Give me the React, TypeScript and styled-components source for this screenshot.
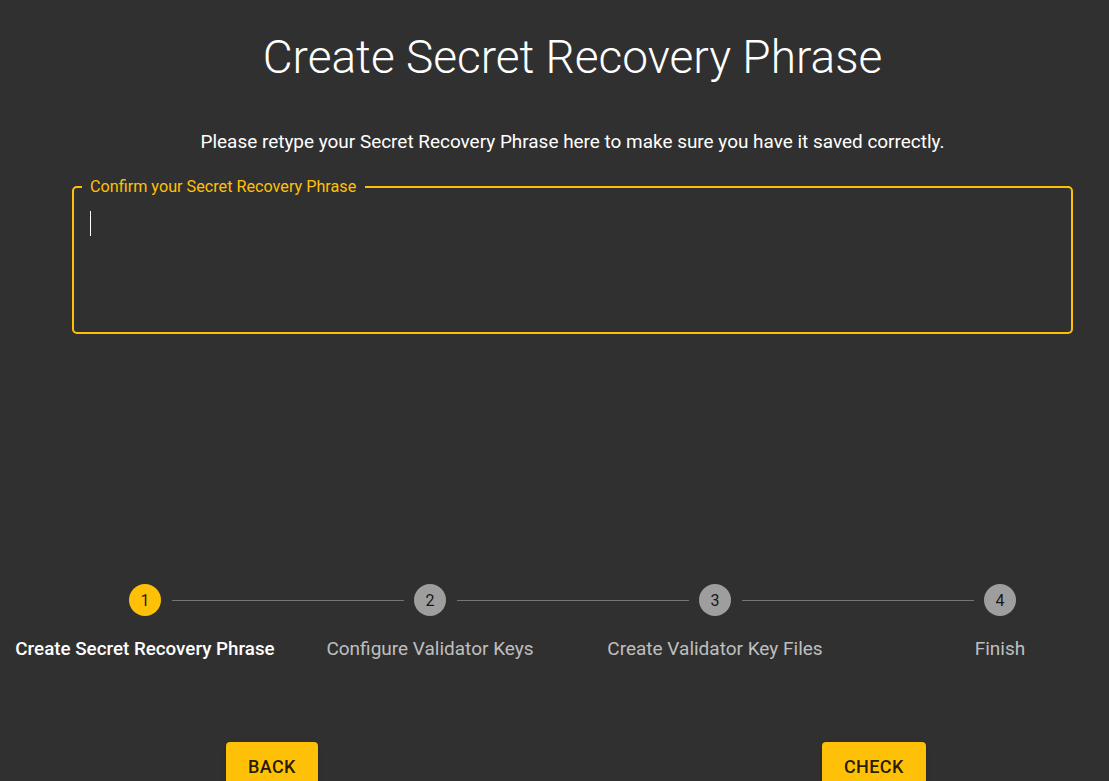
import React from "react";
import styled, { createGlobalStyle } from "styled-components";

const Global = createGlobalStyle`
  html, body {
    margin: 0;
    padding: 0;
    background: #303030;
    overflow: hidden;
    font-family: Roboto, "Liberation Sans", sans-serif;
  }
`;

const Page = styled.div`
  width: 1145px;
  min-height: 781px;
  background: #303030;
  color: #fff;
  display: flex;
  flex-direction: column;
`;

const Title = styled.h1`
  margin: 0;
  padding-top: 29px;
  font-size: 46px;
  line-height: 56px;
  font-weight: 300;
  text-align: center;
  color: #fff;
`;

const Lead = styled.p`
  margin: 43px 0 0;
  font-size: 18.94px;
  line-height: 27px;
  text-align: center;
  color: #fff;
`;

const Field = styled.div`
  position: relative;
  margin: 31px 72px 0;
  height: 148px;
  box-sizing: border-box;
  border: 2px solid #ffc107;
  border-radius: 5px;
  padding: 23px 16px;
`;

const FieldLabel = styled.span`
  position: absolute;
  top: -11px;
  left: 8px;
  padding: 0 9px 0 8px;
  background: #303030;
  color: #ffc107;
  font-size: 16.2px;
  line-height: 20px;
`;

const Caret = styled.span`
  display: block;
  width: 1px;
  height: 25px;
  background: #fff;
`;

const Stepper = styled.div`
  width: 1140px;
  margin: 250px 0 0 2.5px;
`;

const IconRow = styled.div`
  display: flex;
  align-items: center;
  padding: 0 126.5px;
`;

const StepIcon = styled.div<{ $active?: boolean }>`
  width: 32px;
  height: 32px;
  flex: none;
  border-radius: 50%;
  background: ${(p) => (p.$active ? "#ffc107" : "#9e9e9e")};
  color: rgba(0, 0, 0, 0.87);
  display: flex;
  align-items: center;
  justify-content: center;
  font-size: 16px;
`;

const Connector = styled.div`
  flex: 1;
  margin: 0 10px 0 11px;
  border-top: 1px solid #757575;
`;

const LabelRow = styled.div`
  display: grid;
  grid-template-columns: repeat(4, 1fr);
  margin-top: 21px;
`;

const StepLabel = styled.div<{ $active?: boolean }>`
  text-align: center;
  font-size: ${(p) => (p.$active ? "18.8px" : "19px")};
  line-height: 24px;
  font-weight: ${(p) => (p.$active ? 500 : 400)};
  color: ${(p) => (p.$active ? "#fff" : "rgba(255,255,255,0.7)")};
`;

const Actions = styled.div`
  display: flex;
  gap: 504px;
  margin-top: 81px;
  padding-left: 226px;
`;

const Button = styled.button`
  background: #ffc107;
  color: rgba(0, 0, 0, 0.87);
  border: none;
  border-radius: 4px;
  padding: 12px 22px 8px;
  min-height: 46px;
  font-family: Roboto, "Liberation Sans", sans-serif;
  font-size: 18px;
  line-height: 26px;
  font-weight: 500;
  letter-spacing: 0.4px;
  text-transform: uppercase;
  box-shadow: 0 3px 1px -2px rgba(0, 0, 0, 0.2), 0 2px 2px 0 rgba(0, 0, 0, 0.14),
    0 1px 5px 0 rgba(0, 0, 0, 0.12);
  cursor: pointer;
`;

const steps = [
  "Create Secret Recovery Phrase",
  "Configure Validator Keys",
  "Create Validator Key Files",
  "Finish",
];

export default function App() {
  return (
    <>
      <Global />
      <Page>
        <Title>Create Secret Recovery Phrase</Title>
        <Lead>
          Please retype your Secret Recovery Phrase here to make sure you have it saved correctly.
        </Lead>
        <Field>
          <FieldLabel>Confirm your Secret Recovery Phrase</FieldLabel>
          <Caret />
        </Field>
        <Stepper>
          <IconRow>
            {steps.map((s, i) => (
              <React.Fragment key={s}>
                {i > 0 && <Connector />}
                <StepIcon $active={i === 0}>{i + 1}</StepIcon>
              </React.Fragment>
            ))}
          </IconRow>
          <LabelRow>
            {steps.map((s, i) => (
              <StepLabel key={s} $active={i === 0}>
                {s}
              </StepLabel>
            ))}
          </LabelRow>
        </Stepper>
        <Actions>
          <Button>Back</Button>
          <Button>Check</Button>
        </Actions>
      </Page>
    </>
  );
}
